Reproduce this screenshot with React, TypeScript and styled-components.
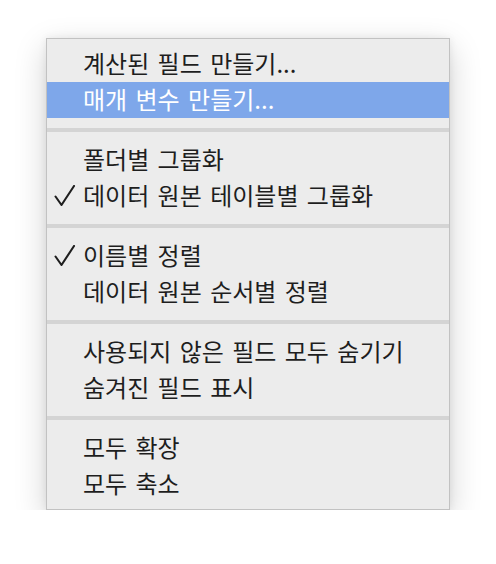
import React from "react";
import styled, { createGlobalStyle } from "styled-components";

const Global = createGlobalStyle`
  html, body { margin: 0; padding: 0; background: #ffffff; }
  body { font-family: "Noto Sans CJK KR", "Noto Sans", sans-serif; }
`;

const Page = styled.div`
  padding: 38px 0 0 46px;
`;

const Menu = styled.div`
  width: 402px;
  background: #ececec;
  border: 1px solid #c2c2c2;
  box-shadow: 0 10px 30px rgba(0, 0, 0, 0.18), 0 0 8px rgba(0, 0, 0, 0.07);
  padding: 7px 0;
  display: flex;
  flex-direction: column;
`;

const Row = styled.div<{ $active?: boolean }>`
  height: 36px;
  display: grid;
  grid-template-columns: 36px 1fr;
  align-items: center;
  background: ${(p) => (p.$active ? "#7ea7ea" : "transparent")};
  color: ${(p) => (p.$active ? "#ffffff" : "#1e1e1e")};
  font-size: 24px;
  line-height: 36px;
  word-spacing: 3px;
  white-space: nowrap;
`;

const Label = styled.span`
  position: relative;
  top: -1px;
`;

const CheckCell = styled.div`
  display: flex;
  align-items: center;
  padding-left: 7px;
`;

const Separator = styled.div`
  height: 24px;
  display: flex;
  align-items: center;
  &::after {
    content: "";
    flex: 1;
    height: 4px;
    background: #d4d4d4;
  }
`;

const Check = () => (
  <svg width="22" height="22" viewBox="0 0 22 22">
    <path d="M1.5 11.5 L7.5 20 L20 1" fill="none" stroke="#1e1e1e" strokeWidth="2.1" strokeLinecap="round" strokeLinejoin="round" />
  </svg>
);

type Item = { label: string; checked?: boolean; active?: boolean };

const sections: Item[][] = [
  [{ label: "계산된 필드 만들기..." }, { label: "매개 변수 만들기...", active: true }],
  [{ label: "폴더별 그룹화" }, { label: "데이터 원본 테이블별 그룹화", checked: true }],
  [{ label: "이름별 정렬", checked: true }, { label: "데이터 원본 순서별 정렬" }],
  [{ label: "사용되지 않은 필드 모두 숨기기" }, { label: "숨겨진 필드 표시" }],
  [{ label: "모두 확장" }, { label: "모두 축소" }],
];

export default function App() {
  return (
    <>
      <Global />
      <Page>
        <Menu>
          {sections.map((sec, i) => (
            <React.Fragment key={i}>
              {i > 0 && <Separator />}
              {sec.map((it) => (
                <Row key={it.label} $active={it.active}>
                  <CheckCell>{it.checked && <Check />}</CheckCell>
                  <Label>{it.label}</Label>
                </Row>
              ))}
            </React.Fragment>
          ))}
        </Menu>
      </Page>
    </>
  );
}
